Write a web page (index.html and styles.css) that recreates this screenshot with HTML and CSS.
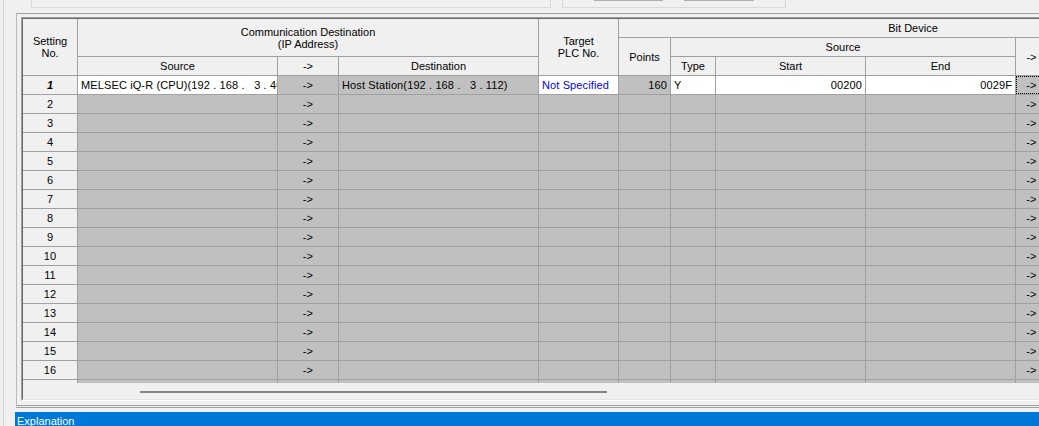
FILE: index.html
```html
<!DOCTYPE html>
<html lang="en">
<head>
    <meta charset="UTF-8">
    <title>Link Refresh Settings</title>
    <link rel="stylesheet" href="styles.css">
</head>
<body>

<div class="window">
    <div class="top-strip">
        <div class="top-box settings"></div>
        <div class="top-box actions">
            <div class="top-button"></div>
            <div class="top-button wide"></div>
        </div>
    </div>

    <div class="setting-panel">
        <div class="grid-frame">
            <div class="grid-view">
                <div class="grid-body" id="gridBody">
                    <!-- header -->
                    <div class="cell head h-setting">Setting<br>No.</div>
                    <div class="cell head h-comm">Communication Destination<br>(IP Address)</div>
                    <div class="cell head h-src">Source</div>
                    <div class="cell head h-arrow">-&gt;</div>
                    <div class="cell head h-dst">Destination</div>
                    <div class="cell head h-plc">Target<br>PLC No.</div>
                    <div class="cell head h-bit">Bit Device</div>
                    <div class="cell head h-points">Points</div>
                    <div class="cell head h-bitsrc">Source</div>
                    <div class="cell head h-type">Type</div>
                    <div class="cell head h-start">Start</div>
                    <div class="cell head h-end">End</div>
                    <div class="cell head h-bitarrow">-&gt;</div>
                    <div class="cell head h-more"></div>

                    <!-- row 1 -->
                    <div class="cell num current">1</div>
                    <div class="cell white">MELSEC iQ-R (CPU)(192 . 168 .   3 . 40)</div>
                    <div class="cell arrow">-&gt;</div>
                    <div class="cell">Host Station(192 . 168 .   3 . 112)</div>
                    <div class="cell white plc">Not Specified</div>
                    <div class="cell right">160</div>
                    <div class="cell white">Y</div>
                    <div class="cell white right">00200</div>
                    <div class="cell white right">0029F</div>
                    <div class="cell arrow focus">-&gt;</div>
                    <div class="cell"></div>
                </div>
                <div class="hscroll">
                    <div class="hscroll-thumb"></div>
                </div>
            </div>
        </div>
    </div>

    <div class="explanation">Explanation</div>
</div>

<script>
    // empty setting rows 2..17
    const gridBody = document.getElementById('gridBody');
    for (let n = 2; n <= 17; n++) {
        gridBody.insertAdjacentHTML('beforeend',
            '<div class="cell num">' + n + '</div>' +
            '<div class="cell"></div>' +
            '<div class="cell arrow">-&gt;</div>' +
            '<div class="cell"></div>' +
            '<div class="cell"></div>' +
            '<div class="cell"></div>' +
            '<div class="cell"></div>' +
            '<div class="cell"></div>' +
            '<div class="cell"></div>' +
            '<div class="cell arrow">-&gt;</div>' +
            '<div class="cell"></div>');
    }
</script>

</body>
</html>
```

FILE: styles.css
```css
body {
    margin: 0;
    background-color: #f0f0f0;
    font-family: "Liberation Sans", Arial, sans-serif;
    font-size: 11px;
    color: #000;
    overflow: hidden;
}
.window {
    margin-left: 3px;
    border-left: 1px solid #d2d2d2;
    width: 1300px;
    height: 426px;
}
.top-strip {
    display: flex;
    margin-left: 27px;
    height: 8px;
}
.top-box {
    box-sizing: border-box;
    height: 8px;
    border: 1px solid #dadada;
    border-top: none;
}
.top-box.settings {
    width: 520px;
}
.top-box.actions {
    display: flex;
    gap: 21px;
    width: 224px;
    margin-left: 11px;
    padding-left: 31px;
}
.top-button {
    width: 69px;
    height: 1px;
    background-color: #adadad;
}
.top-button.wide {
    width: 70px;
}
.setting-panel {
    margin: 5px 0 0 12px;
    padding: 3px 0 4px 4px;
    border-top: 1px solid #a0a0a0;
    border-left: 1px solid #b9b9b9;
    border-bottom: 3px double #a0a0a0;
}
.grid-frame {
    border-top: 1px solid #a0a0a0;
    border-left: 1px solid #a0a0a0;
    border-bottom: 1px solid #fcfcfc;
}
.grid-view {
    border-top: 1px solid #696969;
    border-left: 1px solid #696969;
    border-bottom: 1px solid #e3e3e3;
}
.grid-body {
    display: grid;
    grid-template-columns: 55px 200px 61px 200px 80px 52px 45px 150px 150px 32px 160px;
    grid-auto-rows: 19px;
    height: 364px;
    overflow: hidden;
}
.cell {
    box-sizing: border-box;
    display: flex;
    align-items: center;
    padding: 0 3px;
    border-right: 1px solid #a0a0a0;
    border-bottom: 1px solid #a0a0a0;
    background-color: #c0c0c0;
    white-space: pre;
    letter-spacing: 0.12px;
    overflow: hidden;
}
.cell.head {
    justify-content: center;
    text-align: center;
    line-height: 12px;
    white-space: normal;
    letter-spacing: 0;
    background-color: #f0f0f0;
}
.h-setting { grid-column: 1; grid-row: 1 / 4; }
.h-comm { grid-column: 2 / 5; grid-row: 1 / 3; }
.h-src { grid-column: 2; grid-row: 3; }
.h-arrow { grid-column: 3; grid-row: 3; }
.h-dst { grid-column: 4; grid-row: 3; }
.h-plc { grid-column: 5; grid-row: 1 / 4; }
.h-bit { grid-column: 6 / 12; grid-row: 1; }
.h-points { grid-column: 6; grid-row: 2 / 4; }
.h-bitsrc { grid-column: 7 / 10; grid-row: 2; }
.h-type { grid-column: 7; grid-row: 3; }
.h-start { grid-column: 8; grid-row: 3; }
.h-end { grid-column: 9; grid-row: 3; }
.h-bitarrow { grid-column: 10; grid-row: 2 / 4; }
.h-more { grid-column: 11; grid-row: 2 / 4; }

.cell.num {
    justify-content: center;
    background-color: #f0f0f0;
}
.cell.current {
    font-weight: bold;
    font-style: italic;
}
.cell.white {
    background-color: #fff;
}
.cell.right {
    justify-content: flex-end;
}
.cell.arrow {
    justify-content: center;
}
.cell.plc {
    color: #0000ff;
}
.cell.focus {
    position: relative;
}
.cell.focus::after {
    content: "";
    position: absolute;
    inset: 0;
    border: 1px dotted #000;
}
.hscroll {
    height: 16px;
    padding-top: 8px;
    box-sizing: border-box;
}
.hscroll-thumb {
    width: 467px;
    height: 2px;
    margin-left: 117px;
    background-color: #858585;
}
.explanation {
    box-sizing: border-box;
    height: 22px;
    margin: 4px 0 0 11px;
    padding: 3px 0 0 2px;
    background-color: #0078d7;
    color: #fff;
}
```
